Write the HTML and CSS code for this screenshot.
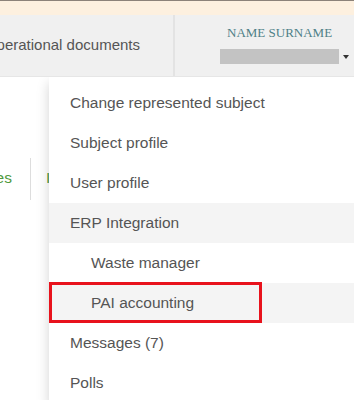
FILE: index.html
```html
<!DOCTYPE html>
<html>
<head>
<meta charset="utf-8">
<link rel="stylesheet" href="styles.css">
</head>
<body>
<div class="topline"></div>
<div class="notice"></div>
<div class="header">
  <div class="nav-cell"><span>Operational documents</span></div>
  <div class="user-cell">
    <div class="user-name">NAME SURNAME</div>
    <div class="user-row">
      <div class="redacted"></div>
      <div class="caret"></div>
    </div>
  </div>
</div>
<div class="page">
  <div class="tabs">
    <div class="tab tab-first"><span>Companies</span></div>
    <div class="tab tab-second"><span>Invoices</span></div>
  </div>
  <ul class="menu">
    <li class="item">Change represented subject</li>
    <li class="item">Subject profile</li>
    <li class="item">User profile</li>
    <li class="item group">ERP Integration</li>
    <li class="item sub">Waste manager</li>
    <li class="item sub active">PAI accounting<span class="highlight"></span></li>
    <li class="item">Messages (7)</li>
    <li class="item">Polls</li>
  </ul>
</div>
</body>
</html>
```

FILE: styles.css
```css
* { box-sizing: border-box; }
html, body {
  margin: 0;
  padding: 0;
  background: #ffffff;
  font-family: "Liberation Sans", Arial, sans-serif;
  overflow: hidden;
}
.topline { height: 1px; background: #8c8279; }
.notice { height: 14px; background: #fdf0df; }
.header {
  display: flex;
  height: 62px;
  background: #f0f0f0;
  border-bottom: 1px solid #e6e6e6;
}
.nav-cell {
  width: 175px;
  flex: none;
  display: flex;
  align-items: center;
  justify-content: flex-end;
  padding-right: 33px;
  padding-bottom: 2px;
  border-right: 2px solid #e3e3e3;
  overflow: hidden;
  white-space: nowrap;
  font-size: 15px;
  color: #555555;
}
.user-cell {
  flex: 1;
  padding: 10px 0 0 45px;
}
.user-name {
  font-family: "Liberation Serif", "Times New Roman", serif;
  font-size: 13px;
  line-height: 15px;
  color: #4e8087;
  margin-left: 7px;
  white-space: nowrap;
}
.user-row {
  display: flex;
  align-items: center;
  margin-top: 9px;
}
.redacted {
  width: 119px;
  height: 15px;
  background: #c3c3c3;
}
.caret {
  width: 0;
  height: 0;
  margin-left: 4px;
  margin-top: 1px;
  border-top: 4px solid #333333;
  border-left: 3px solid transparent;
  border-right: 3px solid transparent;
}
.page {
  position: relative;
  height: 323px;
  padding-top: 81px;
  overflow: hidden;
}
.tabs {
  display: flex;
  height: 42px;
  font-size: 15.5px;
  color: #4f9a3c;
}
.tab {
  display: flex;
  align-items: center;
  white-space: nowrap;
  overflow: hidden;
  padding-bottom: 2px;
}
.tab-first {
  width: 31px;
  justify-content: flex-end;
  padding-right: 18px;
  border-right: 1px solid #dddddd;
}
.tab-second {
  padding-left: 15px;
}
.menu {
  position: absolute;
  left: 49px;
  top: 0;
  right: 0;
  margin: 0;
  padding: 6px 0 0 0;
  list-style: none;
  background: #ffffff;
  box-shadow: 0 6px 12px rgba(0, 0, 0, 0.175);
}
.item {
  position: relative;
  height: 40px;
  line-height: 40px;
  padding-left: 21px;
  font-size: 15.5px;
  color: #555555;
  white-space: nowrap;
}
.item.sub { padding-left: 42px; }
.item.group { background: #f4f4f4; }
.item.active { background: #f4f4f4; }
.highlight {
  position: absolute;
  left: 0;
  top: -1px;
  width: 213px;
  height: 41px;
  border: 3px solid #e8121c;
}
```
